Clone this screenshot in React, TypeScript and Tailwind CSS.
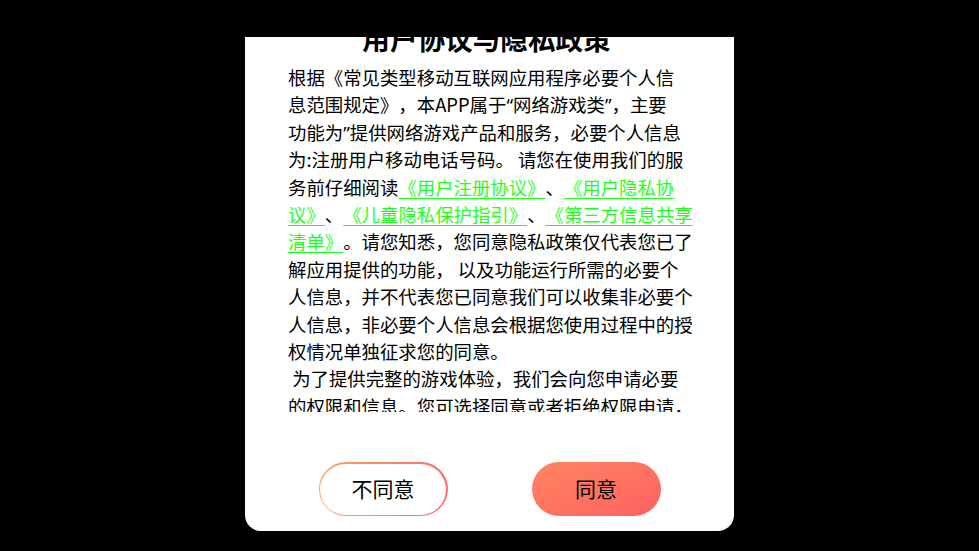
import React from 'react';

const Link = ({ children }: { children: React.ReactNode }) => (
  <span className="text-[#1fff1f] underline underline-offset-[3px] decoration-1">{children}</span>
);

const Q = ({ children }: { children: React.ReactNode }) => (
  <span className="font-['Noto_Sans']">{children}</span>
);

export default function App() {
  return (
    <div
      className="w-[979px] h-[551px] bg-black overflow-hidden flex justify-center"
      style={{ fontFamily: '"Noto Sans CJK SC", "Noto Sans", sans-serif' }}
    >
      <div className="mt-[37px] w-[489px] h-[494px] bg-white rounded-b-[16px] overflow-hidden flex flex-col">
        <div className="h-[375px] overflow-hidden shrink-0 [text-spacing-trim:space-all]">
          <h2 className="-mt-[15px] text-[27.6px] leading-[32px] font-bold text-center text-black pr-[6px]">
            用户协议与隐私政策
          </h2>
          <p className="mt-[10px] px-[43px] text-[18.4px] leading-[27.4px] text-black whitespace-nowrap">
            根据《常见类型移动互联网应用程序必要个人信<br />
            息范围规定》，本APP属于<Q>“</Q>网络游戏类<Q>”</Q>，主要<br />
            功能为<Q>”</Q>提供网络游戏产品和服务，必要个人信息<br />
            为:注册用户移动电话号码。 请您在使用我们的服<br />
            务前仔细阅读<Link>《用户注册协议》</Link>、<Link>《用户隐私协<br />
            议》</Link>、<Link>《儿童隐私保护指引》</Link>、<Link>《第三方信息共享<br />
            清单》</Link>。请您知悉，您同意隐私政策仅代表您已了<br />
            解应用提供的功能， 以及功能运行所需的必要个<br />
            人信息，并不代表您已同意我们可以收集非必要个<br />
            人信息，非必要个人信息会根据您使用过程中的授<br />
            权情况单独征求您的同意。<br />
            {'\u00a0'}为了提供完整的游戏体验，我们会向您申请必要<br />
            的权限和信息。您可选择同意或者拒绝权限申请，<br />
            如果拒绝可能会导致无法使用部分功能。
          </p>
        </div>
        <div className="flex-1 flex items-start justify-center gap-[84px] pt-[50px]">
          <button className="w-[129px] h-[54px] rounded-full p-[1.5px] bg-gradient-to-r from-[#ffa062] to-[#ff6a6e]">
            <span className="flex w-full h-full items-center justify-center rounded-full bg-white text-[21px] text-black">
              不同意
            </span>
          </button>
          <button className="w-[129px] h-[54px] rounded-full bg-gradient-to-br from-[#ff8462] to-[#ff6060] flex items-center justify-center text-[21px] text-black">
            同意
          </button>
        </div>
      </div>
    </div>
  );
}
